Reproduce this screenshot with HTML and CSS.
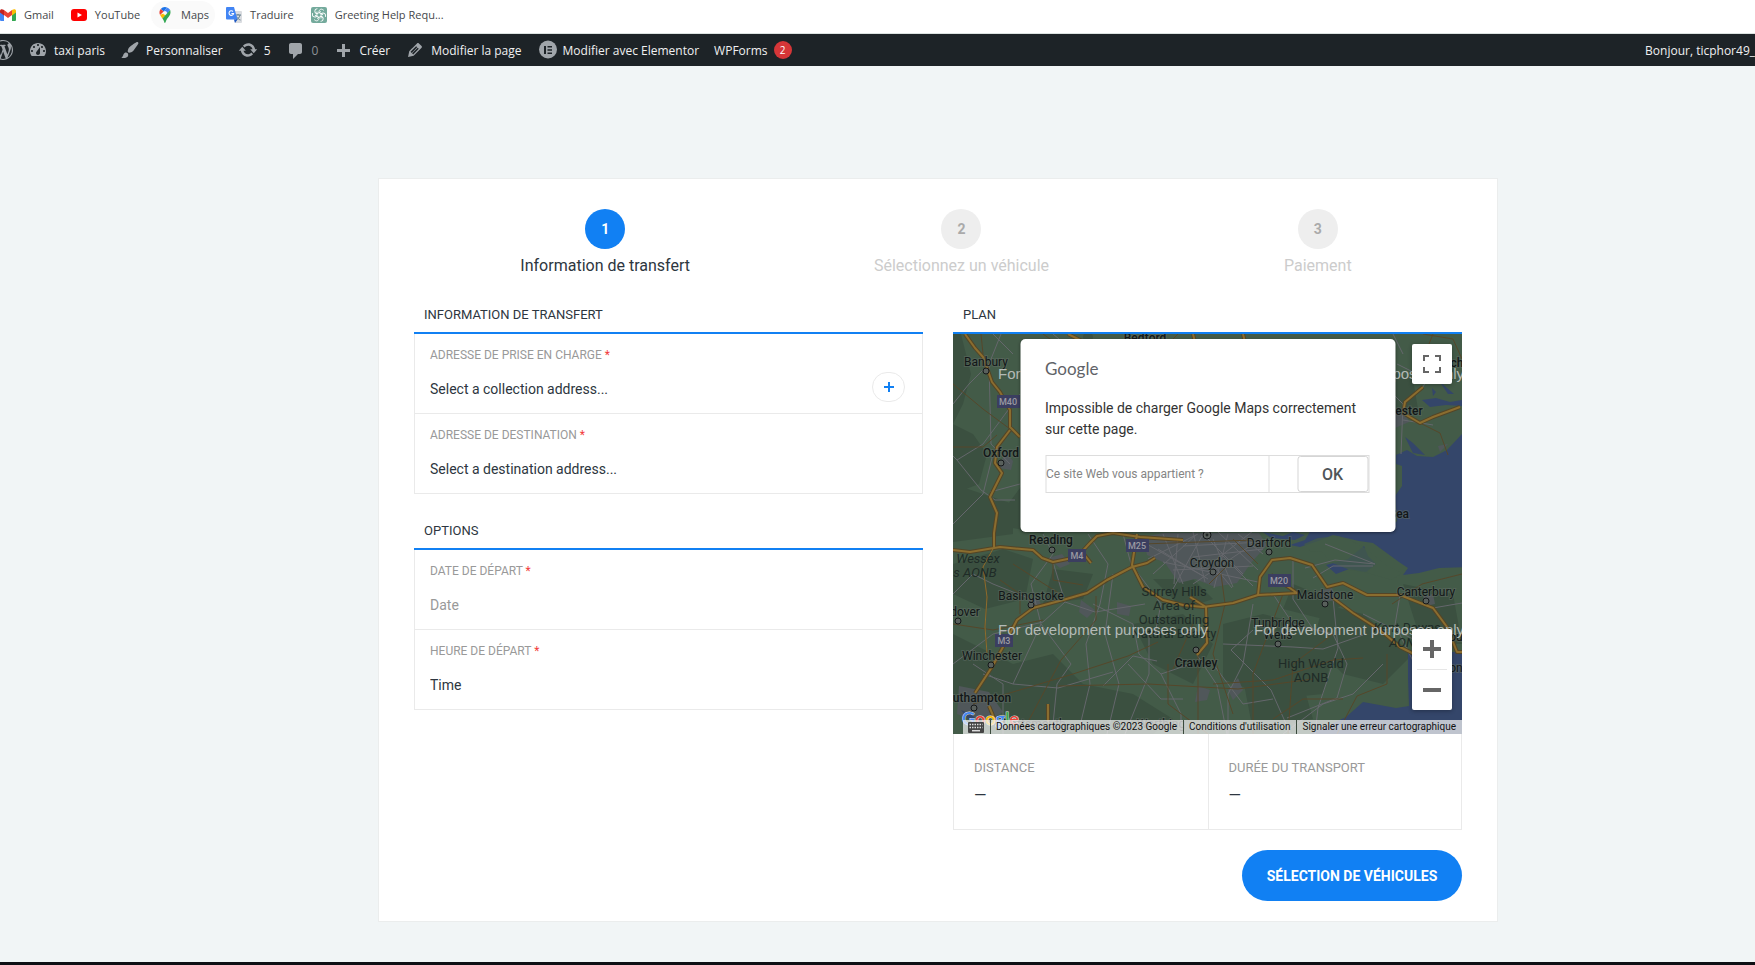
FILE: index.html
```html
<!DOCTYPE html>
<html lang="fr">
<head>
<meta charset="utf-8">
<title>taxi paris</title>
<link rel="stylesheet" href="styles.css">
</head>
<body>
<nav class="bookmarks" aria-label="Favoris">
  <a href="#"><svg viewBox="0 0 16 16"><path d="M0 4v9a1 1 0 0 0 1 1h3V7z" fill="#4285f4"/><path d="M12 7v7h3a1 1 0 0 0 1-1V4z" fill="#34a853"/><path d="M4 3v5l4 3 4-3V3L8 6z" fill="#ea4335"/><path d="M0 4v1.500L4 8.500V3C2 1.500 0 2 0 4z" fill="#c5221f"/><path d="M16 4v1.500L12 8.500V3c2-1.500 4-1 4 1z" fill="#fbbc04"/></svg>Gmail</a>
  <a href="#"><svg viewBox="0 0 16 16"><rect y="2" width="16" height="12" rx="3" fill="#f00"/><path d="M6.500 5.500v5L11 8z" fill="#fff"/></svg>YouTube</a>
  <a href="#" class="hovered"><svg viewBox="0 0 16 16"><path d="M8 0a5.500 5.500 0 0 0-4.300 2l3 2.600L10 .5A5 5 0 0 0 8 0z" fill="#1a73e8"/><path d="M3.700 2a5.500 5.500 0 0 0-.6 6l3.600-3.400z" fill="#ea4335"/><path d="M10 .5L6.700 4.600a2 2 0 0 1 3 2.600l3.500-4.100A5.600 5.600 0 0 0 10 .5z" fill="#4285f4"/><path d="M6.300 6.500L3.100 8c.6 1.300 1.500 2.200 2.300 3.400l4.300-4.200A2 2 0 0 1 6.300 6.500z" fill="#fbbc04"/><path d="M13.200 3.100L5.400 11.400C7 13.300 7.400 16 8 16s.9-2.600 2.300-4.500c1.400-1.800 3.200-3.200 3.200-6 0-.9-.1-1.700-.3-2.400z" fill="#34a853"/></svg>Maps</a>
  <a href="#"><svg viewBox="0 0 16 16"><path d="M6 4h9a1 1 0 0 1 1 1v10a1 1 0 0 1-1 1H9z" fill="#dadce0"/><path d="M9 8h6M12 7v1M14 8c-.5 2.500-2 4-4 5M10.500 9.500c1 2 2.500 3 4 3.500" stroke="#607d8b" fill="none"/><path d="M1 0h7l3.500 12.500H1a1 1 0 0 1-1-1V1a1 1 0 0 1 1-1z" fill="#4285f4"/><path d="M8 12.500h3.500L9 16z" fill="#1a56c4"/><path d="M7 4.500a2.300 2.300 0 1 0 .6 2H5.400" stroke="#fff" fill="none" stroke-width="1.100"/></svg>Traduire</a>
  <a href="#"><svg viewBox="0 0 16 16"><rect width="16" height="16" rx="2" fill="#74aa9c"/><g fill="none" stroke="#fff" stroke-width=".9"><path id="petal" d="M8 5.600V4.500a2.400 2.400 0 0 1 3.600-2l1.200.9M6 6.800L10 4.500"/><use href="#petal" transform="rotate(60 8 8)"/><use href="#petal" transform="rotate(120 8 8)"/><use href="#petal" transform="rotate(180 8 8)"/><use href="#petal" transform="rotate(240 8 8)"/><use href="#petal" transform="rotate(300 8 8)"/></g></svg>Greeting Help Requ...</a>
</nav>

<nav class="adminbar" aria-label="Administration">
  <a href="#" class="wp" aria-label="WordPress"><svg viewBox="0 0 20 20"><path d="M20 10c0-5.510-4.490-10-10-10C4.480 0 0 4.490 0 10c0 5.520 4.480 10 10 10 5.510 0 10-4.480 10-10zM7.780 15.370L4.370 6.220c.55-.02 1.170-.08 1.170-.08.5-.06.44-1.130-.06-1.110 0 0-1.450.11-2.370.11-.18 0-.37 0-.58-.01C4.120 2.690 6.870 1.110 10 1.110c2.330 0 4.450.87 6.050 2.340-.68-.11-1.650.39-1.650 1.580 0 .74.45 1.360.9 2.100.35.61.55 1.360.55 2.460 0 1.490-1.400 5-1.400 5l-3.030-8.370c.54-.02.82-.17.82-.17.5-.05.44-1.250-.06-1.220 0 0-1.440.12-2.380.12-.87 0-2.330-.12-2.330-.12-.5-.03-.56 1.200-.06 1.220l.92.08 1.260 3.410zM17.410 10c.24-.64.74-1.870.43-4.250.7 1.290 1.050 2.710 1.050 4.250 0 3.290-1.730 6.240-4.400 7.780.97-2.590 1.940-5.200 2.920-7.780zM6.100 18.090C3.120 16.650 1.110 13.530 1.110 10c0-1.300.23-2.480.72-3.590C3.250 10.300 4.670 14.200 6.100 18.090zm4.030-6.630l2.580 6.980c-.86.29-1.760.45-2.710.45-.79 0-1.570-.11-2.290-.33.81-2.380 1.620-4.740 2.420-7.100z"/></svg></a>
  <a href="#"><svg viewBox="0 0 20 20"><path d="M3.760 16h12.480c1.100-1.370 1.760-3.110 1.760-5 0-4.420-3.580-8-8-8s-8 3.580-8 8c0 1.890.66 3.630 1.760 5zM10 4c.55 0 1 .45 1 1s-.45 1-1 1-1-.45-1-1 .45-1 1-1zM6 6c.55 0 1 .45 1 1s-.45 1-1 1-1-.45-1-1 .45-1 1-1zm8 0c.55 0 1 .45 1 1s-.45 1-1 1-1-.45-1-1 .45-1 1-1zm-5.370 5.550L12 7v6c0 1.100-.9 2-2 2s-2-.9-2-2c0-.57.24-1.080.63-1.450zM4 10c.55 0 1 .45 1 1s-.45 1-1 1-1-.45-1-1 .45-1 1-1zm12 0c.55 0 1 .45 1 1s-.45 1-1 1-1-.45-1-1 .45-1 1-1z"/></svg>taxi paris</a>
  <a href="#"><svg viewBox="0 0 20 20"><path d="M18.330 3.570s.27-.8-.31-1.360c-.53-.52-1.220-.24-1.220-.24-.61.3-5.760 3.470-7.670 5.570-.86.96-2.060 3.790-1.090 4.820.92.98 3.960-.17 4.790-1 2.060-2.060 5.210-7.170 5.500-7.790zM1.400 17.650c2.370-1.560 1.460-3.410 3.230-4.640.93-.65 2.220-.62 3.080.29.63.67.8 2.570-.16 3.460-1.570 1.450-4 1.550-6.150.89z"/></svg>Personnaliser</a>
  <a href="#"><svg viewBox="0 0 20 20"><path d="M10.200 3.280c3.530 0 6.430 2.610 6.920 6h2.080l-3.500 4-3.500-4h2.320c-.45-1.970-2.210-3.450-4.320-3.450-1.450 0-2.730.71-3.540 1.780L4.950 5.660C6.230 4.200 8.110 3.280 10.200 3.280zm-.4 13.440c-3.520 0-6.430-2.610-6.920-6H.8l3.500-4c1.170 1.330 2.330 2.670 3.500 4H5.480c.45 1.970 2.210 3.450 4.320 3.450 1.450 0 2.730-.71 3.540-1.780l1.710 1.950c-1.280 1.460-3.150 2.380-5.250 2.380z"/></svg>5</a>
  <a href="#" class="muted"><svg viewBox="0 0 20 20"><path d="M5 3h9c1.100 0 2 .9 2 2v7c0 1.100-.9 2-2 2h-2l-5 5v-5H5c-1.100 0-2-.9-2-2V5c0-1.100.9-2 2-2z"/></svg>0</a>
  <a href="#"><svg viewBox="0 0 20 20"><path d="M17 9v3h-5v5H9v-5H4V9h5V4h3v5h5z"/></svg>Créer</a>
  <a href="#"><svg viewBox="0 0 20 20"><path fill-rule="evenodd" d="M13.890 3.390l2.710 2.720c.46.46.42 1.240.03 1.640l-8.010 8.020-5.560 1.160 1.160-5.580s7.600-7.630 7.990-8.030c.39-.39 1.220-.39 1.680.07zm-2.730 2.790l-5.590 5.610 1.110 1.110 5.540-5.650zm-2.970 8.230l5.580-5.600-1.070-1.080-5.590 5.600z"/></svg>Modifier la page</a>
  <a href="#"><svg viewBox="0 0 20 20"><circle cx="11" cy="9.500" r="9"/><path d="M7 6h2v8H7zM10.500 6H15v1.600h-4.500zM10.500 9.200H15v1.600h-4.500zM10.500 12.400H15V14h-4.500z" fill="#1d2327"/></svg>Modifier avec Elementor</a>
  <a href="#">WPForms<span class="count">2</span></a>
  <a href="#" class="account">Bonjour, ticphor49_</a>
</nav>

<main class="page">
  <form class="card">
    <ol class="steps">
      <li class="active"><span>1</span>Information de transfert</li>
      <li><span>2</span>Sélectionnez un véhicule</li>
      <li><span>3</span>Paiement</li>
    </ol>
    <div class="columns">
      <div class="column">
        <h2>Information de transfert</h2>
        <div class="fields">
          <div class="field">
            <label for="pickup">Adresse de prise en charge <b>*</b></label>
            <select id="pickup"><option>Select a collection address...</option></select>
            <button type="button" class="add" aria-label="Ajouter"><svg viewBox="0 0 10 10"><path d="M5 0v10M0 5h10"/></svg></button>
          </div>
          <div class="field">
            <label for="dest">Adresse de destination <b>*</b></label>
            <select id="dest"><option>Select a destination address...</option></select>
          </div>
        </div>
        <h2>Options</h2>
        <div class="fields">
          <div class="field">
            <label for="date">Date de départ <b>*</b></label>
            <input id="date" type="text" placeholder="Date">
          </div>
          <div class="field">
            <label for="time">Heure de départ <b>*</b></label>
            <select id="time"><option>Time</option></select>
          </div>
        </div>
      </div>

      <div class="column">
        <h2>Plan</h2>
        <div class="map">
          <svg class="tiles" viewBox="0 0 509 400" preserveAspectRatio="xMidYMid slice">
            <rect width="509" height="400" fill="#435b48"/>
            <g fill="#3b5040">
              <path d="M0 0h8l10 40-8 30-10 20zM0 90l20 10 14 20-8 30-26 10zM0 150l60 20v30L0 208zM70 150l40 20-20 30-50-10zM50 215l30 10-8 40-40 10-32-15v-30zM100 235l40 5-10 25-40 5zM0 300l60 30 40-10 30 30 50 10 40 25-20 15H90l-40-20-50-20zM180 290l50-10 30 30-20 40-40-20zM270 290l40-10 40 10 30 30-10 40-50 5-50-20zM370 270l40 10 50 40-30 30-40-10-30-30zM290 345l60 5 10 35-60 12zM450 250l50 10 9 50-40 0zM200 245l40 0 20 20-30 10zM430 35l30 10 5 30-30 5zM340 250l50 20-20 15-40-10z"/>
              <circle cx="135" cy="3" r="5"/>
            </g>
            <g fill="#50575a">
              <path d="M190 203l20-4h96l8 12-16 18-14 20-22 4-20-8-16 4-14-20-18-8zM52 118l8 9-2 9-12-2zM95 224l14-4 8 10-10 4zM6 352l30 6 14 20-20 12-26-10zM128 266l14 10-8 8-8-6zM75 266l10-2 4 8-10 4zM245 352l12 4-3 10-12 2zM365 257l14-3 4 12-12 2zM470 262l10-2 2 10-9 2zM285 344l5 12-10 10-5-10zM438 82l12-8 6 14-14 6zM485 112l10-2-8 8zM164 268l14 4-2 10-12-2z"/>
            </g>
            <g fill="#34466a">
              <path d="M509 100l-15 16-14 7-16-1-10-6-11 5v9l6 2v20l-7 10 2 25-5 5-81 4-6 10-15 5 10 2 18-6 15-6 26 6 14 2 26 19 9 6-5 7 16-2 20-5 29-1z"/>
              <path d="M455 344l1 28-13 2-33-6-17 15-36 17h152v-82l-54 0z"/>
              <path d="M373 231l22-6 16-13 4 10 8 8-10 8-17-3-13 5zM469 66l14-2 14 4 12-2v6l-16-1-16 2zM452 103l8 6 12 12-12-2zM479 54l4 4-3 4zM487 48l14 12-6 0zM310 198l20 4 10-4 12 3-10 5-24-2zM8 376l10 4 8 8-10-2z"/>
            </g>
            <path d="M351 210l14-6 20-2 20 8 10 6 20 16 14 7-10 7-28-8-14-2-20-8-8-10-12-1zM395 204l16 12 6 14-12 8" fill="#435b48" opacity=".75"/>
            <g class="local">
              <path d="M48 0L36 30l-20 20L0 70M36 30l2 80 19 20M67 60L30 110 4 126 0 122M4 126l24 30 14 10 20 0M0 190l30-30 10-40M67 150l-30 8M90 200l10 20-22 30 10 40-28 60-30-10M88 290l30 40-14 20-4 40M60 350l45 4 55-16M135 200l20 30-8 40-14 40 4 40-12 50M160 240l-8 60 14 50-12 50M0 260l20-20 20 10 40 16M100 228l12 40 30 10 50-8M112 268l-22 20-50 12-40 30M20 330l30 20 0 50M140 270l40 20 6 30 22 20 30-10M170 200l8 30 30 40-6 30M196 300l0 40-24 60M208 340l20 40 0 20M244 321l20 30 10 49M270 310l70 3 30 2 40-14M300 270l-10 60-15 30 0 40M320 260l20 30 40 10 14 30-10 34-50 20M340 225l0 40 20 30M380 264l5 50-20 60-3 26M410 280l60 30M447 261l-5 30 20 40M420 232l-40 0-20 12M480 274l29-5M430 330l-30 30-30 10-40 30M150 352l30-30 24 5M260 330l30 40 30-5M60 20L40 0M440 0l10 20M100 0l6 5M430 50l20 20-2 50M450 86l30 5M470 53l10-20M444 30l20 10M175 330l33 35 22 0M300 296l-22 20 40 40 20 45M372 210l50 20-40-4-30 8"/>
              <path d="M190 208l60 34M195 225l50-25M200 240l44-40M205 215l50 30M210 200l20 50M225 200l-4 50M240 198l12 50M250 200l-30 55M260 205l20 48M265 198l40 38M275 200l-14 54M285 200l25 20M290 240l-40-40M300 210l-60 40M310 215l-70 8M300 232l-80 4M210 228l95 20M255 232l45-35M230 212l80-4M270 222l30 30M263 234l16 20"/>
            </g>
            <g class="primary">
              <path d="M0 113l30 0 14-12M0 50l30 25 27 20M28 0l2 20M90 0l20 14M225 0l-8 8M100 230l0 16 30 5M47 246l20 14 0 20M143 262l0 24-35 40-32 60M0 290l40 6 50-10M20 370l100-30 55-18 30-14M105 352l90-2 90 5 75-10M215 330l0 40 40 30M240 290l-20 45M260 350l60-4 60-20 30-2M268 240l4 30-12 50 20 60M330 260l-30 80 0 60M380 300l-40 30-5 70M434 320l0 30-30 12-20 38M467 89l20 10 8 22M470 0l30 5 9 20M480 0l-8 20M245 321v79M280 205l25 25M190 210l110-4M256 250l20-20M60 230l50 32M509 240l-40 10-30 20M390 365l-40 0-30 20"/>
            </g>
            <g class="motorway-edge"><use href="#motorways"/></g>
            <g class="motorway"><g id="motorways">
              <path d="M12 0l10 14 8 9 9 25 8 10 10 18v17l10 10M57 96l-13 17-2 16 7 10-12 24 7 16-3 20v14M0 216l17 2 30-5 33 3 9 8 11 4 24-5 13-14 7-7 16-3 27 4 43 3M22 359l17-26 11-20 14-27 16-12 30-8 24-7 20-13 25-13 15-4 8-5M184 200l-5 31 11 22 20 13 20 5 20 2 30-4 25-8 2-18 12-17 18-2 22 7 15 22 16-4 24 12h33l33 13 14 19 10 25 5 0M305 261l39-2-26-18M380 264l20 15 27 17 20 17 14 7M237 263l16 10 1 36-10 12M470 53l-18 15-2 11 17 10 13-6 27-10M36 372l5 12 14 8M95 392l0-22M115 0l16 8M240 0l2 8M290 0l2 8M130 219l8 10"/>
              <path d="M41 213l-11 20 4 30-2 30 2 26" stroke-width="1"/>
            </g></g>
            <g class="pins"><circle cx="33" cy="37" r="3"/><circle cx="48" cy="129" r="3"/><circle cx="99" cy="216" r="3"/><circle cx="78" cy="271" r="3"/><circle cx="5" cy="287" r="3"/><circle cx="38" cy="331" r="3"/><circle cx="21" cy="374" r="3"/><circle cx="260" cy="238" r="3"/><circle cx="316" cy="218" r="3"/><circle cx="372" cy="270" r="3"/><circle cx="473" cy="267" r="3"/><circle cx="325" cy="310" r="3"/><circle cx="243" cy="316" r="3"/><circle cx="254" cy="201" r="4"/><circle cx="254" cy="201" r="1"/></g>
            <g class="shields"><rect x="44" y="61" width="23" height="13"/><rect x="115" y="215" width="18" height="13"/><rect x="173" y="205" width="23" height="13"/><rect x="315" y="240" width="23" height="13"/><rect x="42" y="300" width="18" height="13"/></g>
            <g class="shield-text"><text x="55" y="71">M40</text><text x="124" y="225">M4</text><text x="184" y="215">M25</text><text x="326" y="250">M20</text><text x="51" y="310">M3</text></g>
            <g class="parks"><text x="25" y="229" font-style="italic">Wessex</text><text x="22" y="243" font-style="italic">s AONB</text><text x="221" y="262">Surrey Hills</text><text x="221" y="276">Area of</text><text x="221" y="290">Outstanding</text><text x="221" y="304">Natural Beauty</text><text x="358" y="334">High Weald</text><text x="358" y="348">AONB</text><text x="454" y="298" font-style="italic">Kent Downs</text><text x="453" y="313" font-style="italic">AONB</text></g>
            <g class="towns"><text x="33" y="32">Banbury</text><text x="78" y="266">Basingstoke</text><text x="12" y="282">dover</text><text x="39" y="326">Winchester</text><text x="259" y="233">Croydon</text><text x="316" y="213">Dartford</text><text x="372" y="265">Maidstone</text><text x="473" y="262">Canterbury</text><text x="325" y="293">Tunbridge</text><text x="325" y="305">Wells</text><text x="81" y="394">Portsmouth</text><text x="208" y="394">Worthing</text><text x="503" y="338">on</text><text x="503" y="307">ou</text></g>
            <g class="cities"><text x="192" y="8">Bedford</text><text x="48" y="123">Oxford</text><text x="98" y="210">Reading</text><text x="243" y="333">Crawley</text><text x="29" y="368">uthampton</text><text x="456" y="81">ester</text><text x="446" y="184">Sea</text><text x="504" y="33">ch</text></g>
            <g class="watermark"><text x="45" y="45">For development purposes only</text><text x="301" y="45">For development purposes only</text><text x="45" y="301">For development purposes only</text><text x="301" y="301">For development purposes only</text></g>
          </svg>
          <span class="map-logo"><i>G</i><i>o</i><i>o</i><i>g</i><i>l</i><i>e</i></span>
          <div class="credits">
            <button type="button" aria-label="Raccourcis clavier"><svg viewBox="0 0 16 11"><rect y="0" width="16" height="11" rx="1" fill="#444"/><path d="M1.500 2.500h13M1.500 5.500h13" stroke="#ddd" stroke-width="1.500" stroke-dasharray="1.500 1"/><path d="M4 8.700h8" stroke="#ddd" stroke-width="1.500"/></svg></button>
            <span>Données cartographiques ©2023 Google</span>
            <a href="#">Conditions d'utilisation</a>
            <a href="#">Signaler une erreur cartographique</a>
          </div>
          <button type="button" class="fullscreen" aria-label="Plein écran"><svg viewBox="0 0 18 18"><path d="M1 6V1h5M12 1h5v5M17 12v5h-5M6 17H1v-5"/></svg></button>
          <div class="zoom">
            <button type="button" aria-label="Zoom avant"><svg viewBox="0 0 18 18"><path d="M9 0v18M0 9h18"/></svg></button>
            <button type="button" aria-label="Zoom arrière"><svg viewBox="0 0 18 18"><path d="M0 9h18"/></svg></button>
          </div>
          <div class="dialog" role="dialog" aria-label="Google Maps">
            <span class="brand">Google</span>
            <p>Impossible de charger Google Maps correctement sur cette page.</p>
            <div class="actions"><a href="#">Ce site Web vous appartient ?</a><button type="button">OK</button></div>
          </div>
        </div>
        <dl class="summary">
          <div><dt>Distance</dt><dd>—</dd></div>
          <div><dt>Durée du transport</dt><dd>—</dd></div>
        </dl>
        <button type="submit" class="submit">Sélection de véhicules</button>
      </div>
    </div>
  </form>
</main>
<footer class="edge"></footer>
</body>
</html>
```
FILE: styles.css
```css
* { box-sizing: border-box; }
body {
  margin: 0;
  min-height: 100vh;
  display: flex;
  flex-direction: column;
  background: #f1f5f6;
  color: #2c3e50;
  font-family: Roboto, "Liberation Sans", sans-serif;
  overflow-x: hidden;
}
button, input, select { font-family: inherit; }
a { color: inherit; text-decoration: none; }

/* Bookmarks */
.bookmarks {
  display: flex;
  align-items: center;
  gap: 5px;
  height: 34px;
  padding-bottom: 4px;
  background: #fff;
  border-bottom: 1px solid #dce3e1;
  color: #45484b;
  font: 11px "Open Sans", "Noto Sans", sans-serif;
  white-space: nowrap;
}
.bookmarks a { display: flex; align-items: center; gap: 8px; height: 28px; padding: 0 6px; border-radius: 14px; }
.bookmarks a:first-child { padding-left: 0; }
.bookmarks svg { width: 16px; height: 16px; }
.bookmarks .hovered { background: #fafafa; }

/* Admin bar */
.adminbar {
  display: flex;
  align-items: center;
  gap: 15px;
  height: 32px;
  background: #1d2327;
  color: #f0f0f1;
  font: 12px "Open Sans", "Noto Sans", sans-serif;
  white-space: nowrap;
}
.adminbar a { display: flex; align-items: center; gap: 6px; }
.adminbar svg { width: 20px; height: 20px; fill: #a0a5aa; }
.adminbar .wp { margin-left: -7px; }
.adminbar .muted { color: #8c9196; }
.adminbar .count {
  width: 18px;
  height: 18px;
  border-radius: 9px;
  background: #d63638;
  color: #fff;
  font-size: 10px;
  line-height: 18px;
  text-align: center;
}
.adminbar .account { margin-left: auto; }

/* Booking card */
.page { flex: 1; padding: 112px 257px 40px 378px; }
.card { padding: 30px 35px 20px; background: #fff; border: 1px solid #ebeded; }
.steps {
  display: grid;
  grid-template-columns: repeat(3, 1fr);
  margin: 0 -34px 0 13px;
  padding: 0;
  list-style: none;
  color: #ccc;
  font-size: 16px;
  line-height: 34px;
}
.steps li { display: flex; flex-direction: column; align-items: center; }
.steps span {
  width: 40px;
  height: 40px;
  border-radius: 50%;
  background: #eee;
  color: #aaa;
  font-size: 14px;
  font-weight: 700;
  line-height: 40px;
  text-align: center;
}
.steps .active { color: #2d3640; }
.steps .active span { background: #1180f3; color: #fff; }
.columns { display: grid; grid-template-columns: 1fr 1fr; gap: 30px; margin-top: 22px; }
.column { display: flex; flex-direction: column; min-width: 0; }
h2 {
  margin: 0;
  padding: 0 10px 7px;
  border-bottom: 2px solid #1180f3;
  color: #2d3640;
  font-size: 13px;
  font-weight: 400;
  line-height: 20px;
  text-transform: uppercase;
}
.fields { border: 1px solid #eaeaea; border-top: 0; }
.fields + h2 { margin-top: 27px; }
.field { position: relative; height: 79px; padding: 11px 15px; }
.field + .field { height: 80px; border-top: 1px solid #eaeaea; }
.field label {
  display: block;
  color: #999;
  font-size: 12px;
  line-height: 20px;
  text-transform: uppercase;
}
.field b { color: #f23c3c; font-weight: 400; }
.field select, .field input {
  display: block;
  width: 80%;
  height: 24px;
  margin: 12px 0 0;
  padding: 0;
  appearance: none;
  border: 0;
  outline: 0;
  background: none;
  color: #2d3640;
  font-size: 14px;
}
.field input::placeholder { color: #999; opacity: 1; }
.add {
  position: absolute;
  right: 17px;
  top: 38px;
  display: grid;
  place-items: center;
  width: 33px;
  height: 30px;
  padding: 0;
  border: 1px solid #eaeaea;
  border-radius: 15px;
  background: #fff;
}
.add svg { width: 10px; height: 10px; stroke: #1180f3; stroke-width: 2; }

/* Map */
.map { position: relative; height: 400px; overflow: hidden; background: #435b48; }
.tiles { display: block; width: 100%; height: 100%; }
.local { fill: none; stroke: #65676c; stroke-width: 1; stroke-linejoin: round; }
.primary { fill: none; stroke: #56472a; stroke-width: 1; stroke-linejoin: round; }
.motorway-edge { fill: none; stroke: #544526; stroke-width: 4; stroke-linejoin: round; }
.motorway { fill: none; stroke: #8b6d2f; stroke-width: 2; stroke-linejoin: round; }
.pins { fill: #59605c; stroke: #15181a; stroke-width: 1; }
.shields { fill: #3b3e60; }
.tiles text { text-anchor: middle; }
.tiles .shield-text text { fill: #9a9aa2; font-size: 9px; font-weight: 500; }
.parks { fill: #1f2b27; font-size: 13px; }
.towns, .cities { fill: #121617; stroke: #606c64; stroke-width: 2; stroke-opacity: .5; paint-order: stroke; font-size: 12px; }
.cities { font-weight: 500; }
.tiles .watermark text { fill: #b4bab6; font-family: "Liberation Sans", sans-serif; font-size: 15px; text-anchor: start; }
.map-logo { position: absolute; left: 9px; bottom: 4px; font: 600 18px/24px Lato, sans-serif; -webkit-text-stroke: 1px #ddd; paint-order: stroke; }
.map-logo i { font-style: normal; color: #4285f4; }
.map-logo i:nth-child(2), .map-logo i:nth-child(6) { color: #ea4335; }
.map-logo i:nth-child(3) { color: #fbbc04; }
.map-logo i:nth-child(5) { color: #34a853; }
.credits {
  position: absolute;
  right: 0;
  bottom: 0;
  display: flex;
  height: 14px;
  background: rgba(245, 245, 245, .72);
  color: #111;
  font-size: 10px;
  line-height: 14px;
  white-space: nowrap;
}
.credits > * { padding: 0 6px 0 5px; }
.credits > * + * { border-left: 1px solid #3a4a3c; }
.credits button { width: 27px; border: 0; background: none; }
.credits svg { display: block; width: 16px; height: 11px; }
.fullscreen, .zoom { position: absolute; right: 10px; border-radius: 2px; background: #fff; box-shadow: 0 1px 4px rgba(0, 0, 0, .3); }
.fullscreen { top: 10px; display: grid; place-items: center; width: 40px; height: 40px; padding: 0; border: 0; }
.fullscreen svg, .zoom svg { width: 18px; height: 18px; fill: none; stroke: #666; stroke-width: 2; }
.zoom { bottom: 24px; width: 40px; padding: 0 5px; }
.zoom svg { stroke-width: 4; }
.zoom button { display: grid; place-items: center; width: 100%; height: 40px; padding: 0; border: 0; background: none; }
.zoom button + button { height: 41px; border-top: 1px solid #e6e6e6; }
.dialog {
  position: absolute;
  top: 5px;
  left: 50%;
  width: 375px;
  height: 193px;
  padding: 18px 26px 18px 25px;
  transform: translateX(-50%);
  border-radius: 5px;
  background: #fff;
  box-shadow: 0 1px 3px rgba(0, 0, 0, .4);
}
.brand { display: block; color: #5f6368; font: 17px/24px Lato, sans-serif; }
.dialog p { margin: 17px 0 15px; color: #333; font-size: 14px; line-height: 21px; }
.actions {
  display: flex;
  justify-content: space-between;
  height: 38px;
  border: 1px solid #ddd;
}
.actions a { width: 223px; border-right: 1px solid #ddd; color: #858585; font-size: 12px; line-height: 36px; }
.actions button { width: 71px; border: 1px solid #d5d5d5; border-radius: 3px; background: #fff; color: #4f5559; font-size: 16px; font-weight: 500; }

/* Summary */
.summary { display: grid; grid-template-columns: 1fr 1fr; margin: 0; border: 1px solid #eaeaea; border-top: 0; text-transform: uppercase; }
.summary div { height: 95px; padding: 24px 20px; }
.summary div + div { border-left: 1px solid #eaeaea; }
.summary dt { color: #999; font-size: 13px; line-height: 20px; }
.summary dd { margin: 8px 0 0; color: #2d3640; font-size: 16px; line-height: 20px; }
.submit {
  align-self: flex-end;
  width: 220px;
  height: 51px;
  margin-top: 20px;
  padding: 0;
  border: 0;
  border-radius: 26px;
  background: #1180f3;
  color: #fff;
  font-size: 14px;
  font-weight: 700;
  text-transform: uppercase;
}
.edge { height: 3px; background: #0e0f14; }
```
